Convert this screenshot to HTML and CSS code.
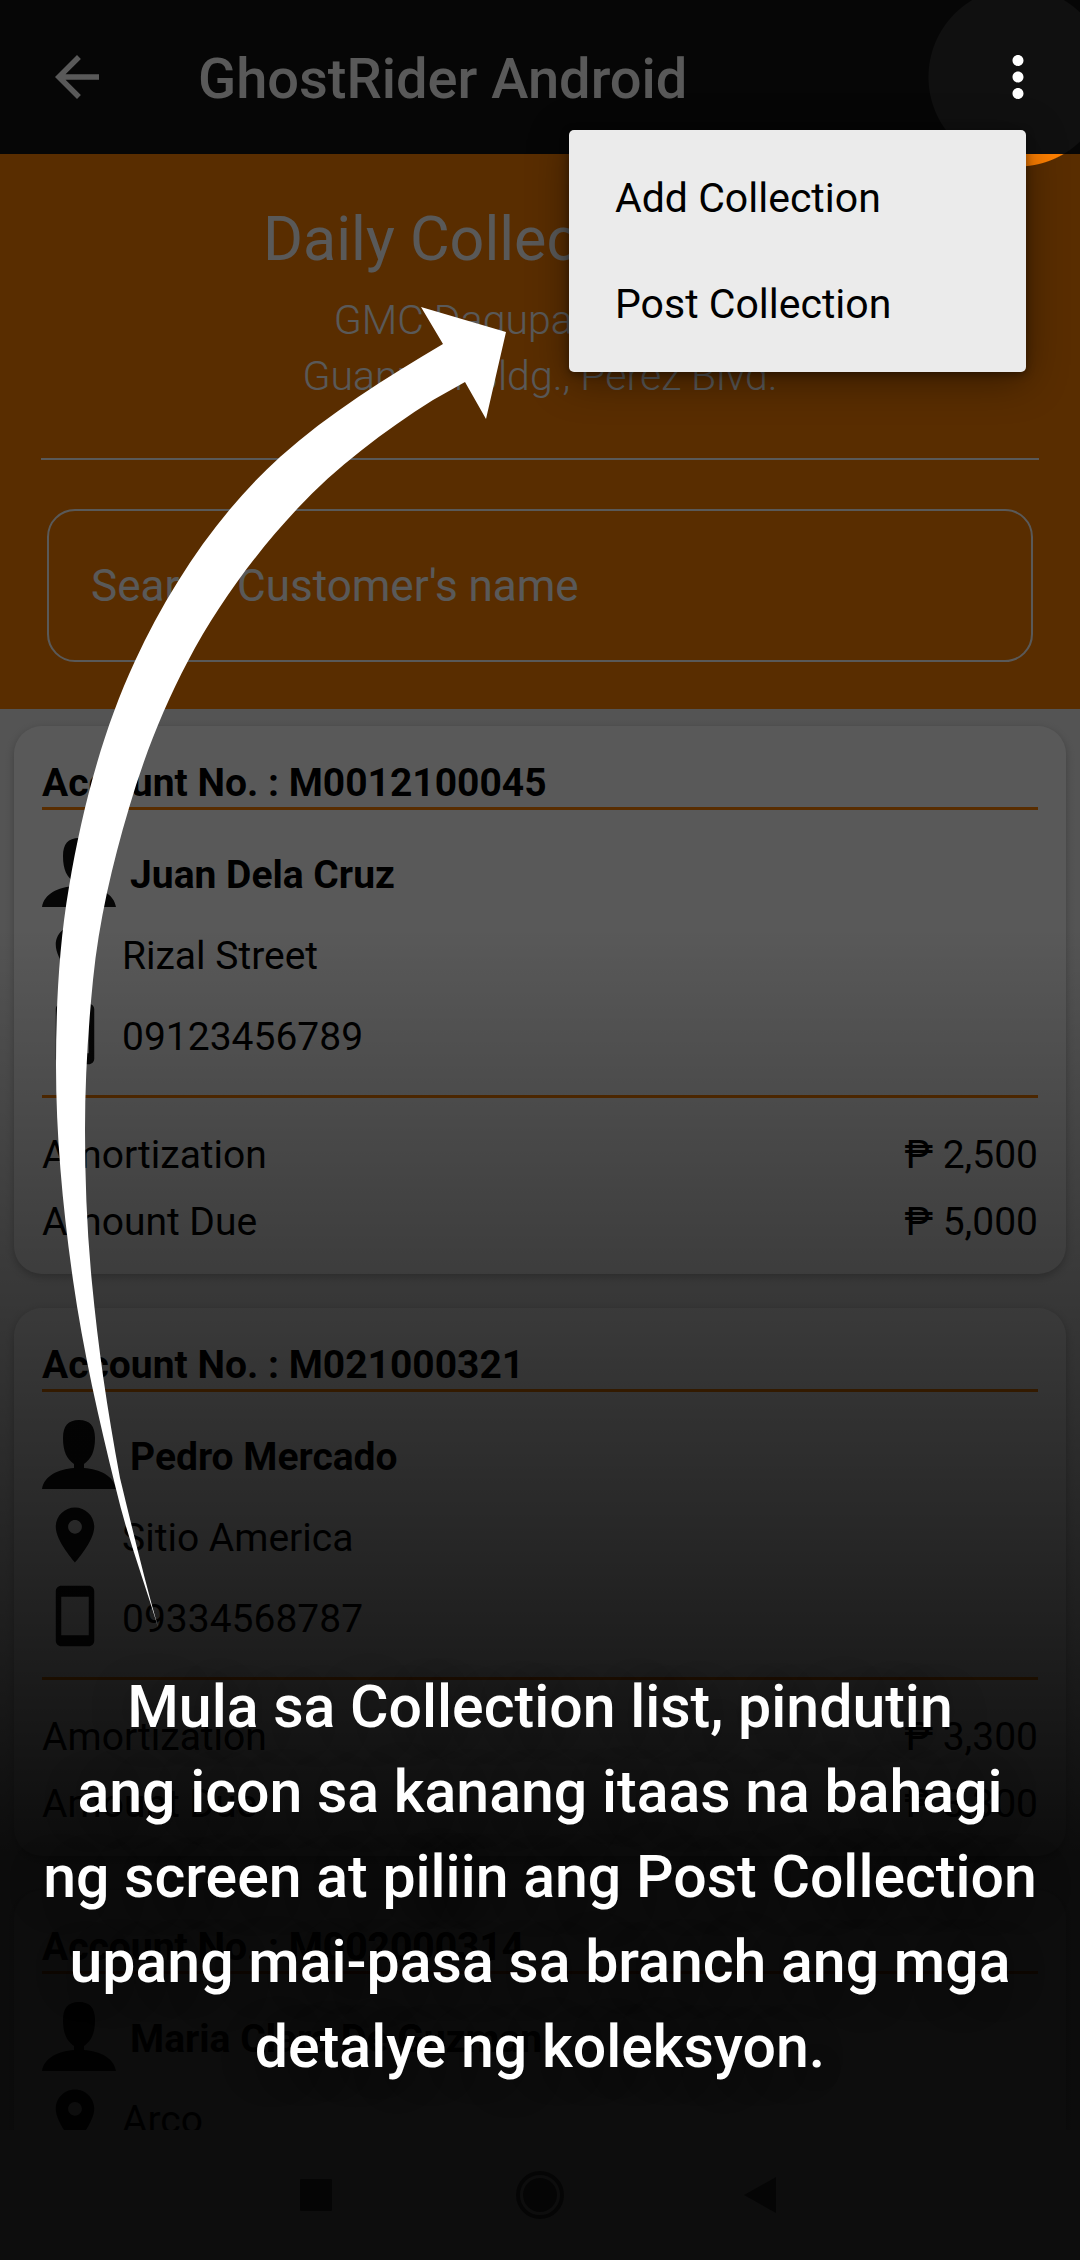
FILE: index.html
```html
<!DOCTYPE html>
<html lang="fil">
<head>
<meta charset="utf-8">
<meta name="viewport" content="width=device-width, initial-scale=1">
<title>GhostRider Android</title>
<link rel="stylesheet" href="styles.css">
</head>
<body>
<svg class="symbols" aria-hidden="true">
  <symbol id="person" viewBox="0 0 74 74"><path d="M37 0C48 0 53 6 53 18C53 32 49 39 42 44V48C58 49 72 56 74 69H0C2 56 16 49 32 48V44C25 39 21 32 21 18C21 6 26 0 37 0Z"/></symbol>
  <symbol id="pin" viewBox="0 0 24 24"><path d="M12 2C8.13 2 5 5.13 5 9c0 5.25 7 13 7 13s7-7.75 7-13c0-3.87-3.13-7-7-7zm0 9.5c-1.38 0-2.5-1.12-2.5-2.5s1.12-2.5 2.5-2.5 2.5 1.12 2.5 2.5-1.12 2.5-2.5 2.5z"/></symbol>
  <symbol id="phone" viewBox="0 0 24 24"><path d="M17 1.01L7 1c-1.1 0-1.99.9-1.99 2v18c0 1.1.89 2 1.99 2h10c1.1 0 2-.9 2-2V3c0-1.1-.9-1.99-2-1.99zM17 19H7V5h10v14z"/></symbol>
</svg>
<div class="screen">
  <header class="appbar">
    <button class="icon-button" type="button" aria-label="Back">
      <svg class="icon" viewBox="0 0 24 24"><path d="M20 11H7.83l5.59-5.59L12 4l-8 8 8 8 1.41-1.41L7.83 13H20v-2z"/></svg>
    </button>
    <h1 class="appbar-title">GhostRider Android</h1>
    <button class="icon-button" type="button" aria-label="More options" aria-expanded="true">
      <svg class="icon" viewBox="0 0 24 24"><path d="M12 8c1.1 0 2-.9 2-2s-.9-2-2-2-2 .9-2 2 .9 2 2 2zm0 2c-1.1 0-2 .9-2 2s.9 2 2 2 2-.9 2-2-.9-2-2-2zm0 6c-1.1 0-2 .9-2 2s.9 2 2 2 2-.9 2-2-.9-2-2-2z"/></svg>
    </button>
  </header>

  <section class="hero">
    <h2 class="hero-title">Daily Collection Plan</h2>
    <p class="hero-branch">GMC Dagupan - Honda<br>Guanzon Bldg., Perez Blvd.</p>
    <div class="hero-rule"></div>
    <input class="search" type="search" placeholder="Search Customer's name" aria-label="Search Customer's name">
  </section>

  <main class="list">
    <article class="card">
      <h3 class="account">Account No. : M0012100045</h3>
      <div class="person"><svg class="avatar"><use href="#person"/></svg><span>Juan Dela Cruz</span></div>
      <div class="detail"><svg class="icon"><use href="#pin"/></svg><span class="detail-text">Rizal Street</span></div>
      <div class="detail"><svg class="icon"><use href="#phone"/></svg><span class="detail-text">09123456789</span></div>
      <dl class="amounts">
        <div class="amount"><dt>Amortization</dt><dd>₱ 2,500</dd></div>
        <div class="amount"><dt>Amount Due</dt><dd>₱ 5,000</dd></div>
      </dl>
    </article>
    <article class="card">
      <h3 class="account">Account No. : M021000321</h3>
      <div class="person"><svg class="avatar"><use href="#person"/></svg><span>Pedro Mercado</span></div>
      <div class="detail"><svg class="icon"><use href="#pin"/></svg><span class="detail-text">Sitio America</span></div>
      <div class="detail"><svg class="icon"><use href="#phone"/></svg><span class="detail-text">09334568787</span></div>
      <dl class="amounts">
        <div class="amount"><dt>Amortization</dt><dd>₱ 3,300</dd></div>
        <div class="amount"><dt>Amount Due</dt><dd>₱ 3,300</dd></div>
      </dl>
    </article>
    <article class="card">
      <h3 class="account">Account No. : M002000314</h3>
      <div class="person"><svg class="avatar"><use href="#person"/></svg><span>Maria Clara De Guzman</span></div>
      <div class="detail"><svg class="icon"><use href="#pin"/></svg><span class="detail-text">Arco</span></div>
    </article>
  </main>

  <nav class="navbar" aria-label="System">
    <button class="nav-button" type="button" aria-label="Recent apps"><svg class="nav-icon" viewBox="0 0 50 50"><rect x="9" y="9" width="32" height="32" rx="1"/></svg></button>
    <button class="nav-button" type="button" aria-label="Home"><svg class="nav-icon" viewBox="0 0 50 50"><circle cx="25" cy="25" r="22" fill="none" stroke="currentColor" stroke-width="4"/><circle cx="25" cy="25" r="17"/></svg></button>
    <button class="nav-button" type="button" aria-label="Back"><svg class="nav-icon" viewBox="0 0 50 50"><path d="M5 25L37 7V43Z"/></svg></button>
  </nav>

  <div class="scrim"></div>

  <div class="menu" role="menu">
    <button class="menu-item" type="button" role="menuitem">Add Collection</button>
    <button class="menu-item" type="button" role="menuitem">Post Collection</button>
  </div>

  <svg class="pointer" viewBox="0 0 520 1640" aria-hidden="true">
    <path d="M506 332L421 307L443 344C386 378 329 413 280 457C218 513 170 586 135 661C102 732 82 810 69 887C59 945 56 1006 56 1065C56 1137 63 1209 73 1280C83 1350 99 1420 116 1489C127 1536 144 1581 158 1627C144 1578 131 1523 120 1478C107 1408 98 1346 92 1283C87 1232 85 1181 85 1130C85 1080 88 1030 93 980C99 921 112 865 129 808C144 757 163 708 188 661C217 606 255 554 297 509C336 467 384 431 433 400L465 382L486 419Z"/>
  </svg>

  <p class="hint">Mula sa Collection list, pindutin<br>ang icon sa kanang itaas na bahagi<br>ng screen at piliin ang Post Collection<br>upang mai-pasa sa branch ang mga<br>detalye ng koleksyon.</p>
</div>
</body>
</html>
```
FILE: styles.css
```css
* { box-sizing: border-box; }

body {
  margin: 0;
  font-family: Roboto, "Liberation Sans", sans-serif;
  color: #000;
  background: #f0f0f0;
}

h1, h2, h3, p, dl, dd { margin: 0; font-weight: 400; }

button {
  padding: 0;
  border: 0;
  background: none;
  color: inherit;
  font: inherit;
}

.symbols { position: absolute; width: 0; height: 0; }

.screen {
  position: relative;
  display: flex;
  flex-direction: column;
  height: 100vh;
  overflow: hidden;
}

.icon {
  display: block;
  flex: none;
  width: 66px;
  height: 66px;
  fill: currentColor;
}

/* App bar */
.appbar {
  display: flex;
  align-items: center;
  flex: none;
  height: 154px;
  padding: 0 29px 0 44px;
  background: #101010;
  color: #fff;
}

.appbar-title {
  flex: 1;
  padding: 4px 0 0 88px;
  font-size: 56px;
  line-height: 64px;
  font-weight: 500;
}

/* Orange heading */
.hero {
  flex: none;
  padding: 50px 41px 47px;
  background: #ff8000;
  color: #fff;
  text-align: center;
}

.hero-title { font-size: 61px; line-height: 70px; }

.hero-branch {
  margin-top: 18px;
  font-size: 41px;
  line-height: 56px;
  font-weight: 300;
}

.hero-rule { height: 2px; margin: 54px 0 49px; background: #fff; }

.search {
  display: block;
  width: calc(100% - 12px);
  height: 153px;
  margin: 0 6px;
  padding: 0 42px;
  border: 2px solid #fff;
  border-radius: 28px;
  background: none;
  color: #fff;
  font: 400 44px Roboto, "Liberation Sans", sans-serif;
  appearance: none;
}

.search::placeholder { color: #fff; opacity: 1; }

/* Customer list */
.list {
  display: flex;
  flex-direction: column;
  gap: 34px;
  flex: 1;
  min-height: 0;
  padding: 17px 14px;
  overflow: hidden;
  font-size: 39px;
  line-height: 48px;
}

.card {
  flex: none;
  padding: 33px 28px 28px;
  border-radius: 28px;
  background: #fff;
  box-shadow: 0 3px 8px rgba(0, 0, 0, .25);
}

.account {
  border-bottom: 3px solid #ff8000;
  font-size: 39px;
  font-weight: 700;
}

.person {
  display: flex;
  align-items: center;
  gap: 14px;
  margin: 28px 0 8px;
  font-weight: 700;
}

.avatar { flex: none; width: 74px; height: 74px; fill: #101010; }

.detail { display: flex; align-items: center; gap: 14px; }
.detail + .detail { margin-top: 15px; }
.detail .icon { fill: #101010; }
.detail-text { padding-top: 5px; }

.amounts {
  display: grid;
  gap: 19px;
  margin-top: 28px;
  padding-top: 33px;
  border-top: 3px solid #ff8000;
}

.amount { display: flex; justify-content: space-between; }

/* System navigation */
.navbar {
  display: flex;
  justify-content: center;
  align-items: center;
  gap: 174px;
  flex: none;
  height: 130px;
  background: #fff;
  color: #606060;
}

.nav-button { width: 50px; height: 50px; }
.nav-icon { display: block; width: 50px; height: 50px; fill: currentColor; }

/* Dimming layer with a clear circle over the menu button */
.scrim {
  position: absolute;
  inset: 0;
  background:
    linear-gradient(to bottom, rgba(0, 0, 0, 0) 41%, rgba(0, 0, 0, .86) 82%),
    radial-gradient(circle at calc(100% - 62px) 77px, transparent 89px, rgba(0, 0, 0, .65) 90px);
}

.menu {
  position: absolute;
  top: 130px;
  right: 54px;
  display: grid;
  width: 457px;
  padding: 15px 0;
  border-radius: 5px;
  background: #ebebeb;
  box-shadow: 0 8px 40px rgba(0, 0, 0, .4), 0 2px 8px rgba(0, 0, 0, .4);
}

.menu-item {
  height: 106px;
  padding: 0 46px;
  font-size: 41px;
  text-align: left;
}

.pointer {
  position: absolute;
  top: 0;
  left: 0;
  width: 520px;
  height: 1640px;
  fill: #fff;
  pointer-events: none;
}

.hint {
  position: absolute;
  right: 0;
  bottom: 171px;
  left: 0;
  color: #fff;
  font-size: 59px;
  line-height: 85px;
  font-weight: 500;
  text-align: center;
  text-shadow: 0 4px 40px rgba(0, 0, 0, .3);
}
```
